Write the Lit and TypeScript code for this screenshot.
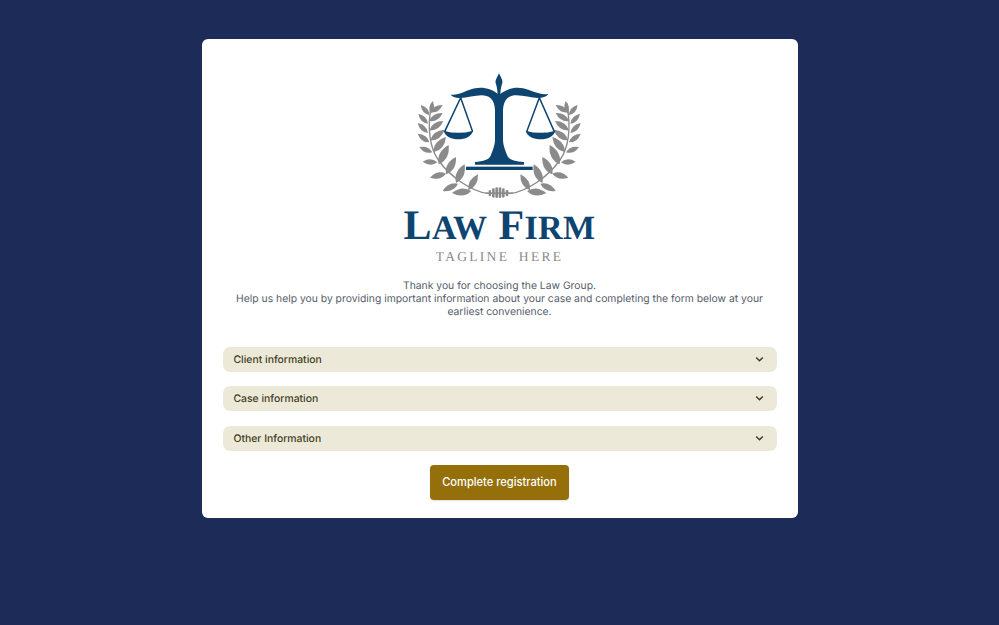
import { LitElement, html, css, svg } from "lit";
import { customElement } from "lit/decorators.js";

type Leaf = [number, number, number, number];
const leaves: Leaf[] = [
  [92, 146, 98, 108],
  [88, 150, 62, 120], [84, 176, 55, 146], [84, 204, 53, 174], [88, 232, 53, 206],
  [97, 262, 58, 246], [112, 292, 68, 290], [138, 326, 90, 338], [174, 356, 128, 378], [214, 378, 156, 384],
  [92, 142, 128, 120], [88, 168, 128, 144], [88, 196, 130, 168], [91, 226, 134, 194],
  [100, 262, 138, 216], [116, 298, 146, 240], [138, 328, 168, 276], [168, 354, 194, 298], [205, 376, 234, 328],
];

function leafPath([bx, by, tx, ty]: Leaf): string {
  const dx = tx - bx, dy = ty - by;
  const nx = -dy * 0.36, ny = dx * 0.36;
  const mx = bx + dx * 0.45, my = by + dy * 0.45;
  return `M${bx} ${by}Q${mx + nx} ${my + ny} ${tx} ${ty}Q${mx - nx} ${my - ny} ${bx} ${by}Z`;
}

const laurel = svg`
  <path d="M262 385C215 380 150 335 115 285C90 250 80 190 95 115" fill="none" stroke="#8b8b8b" stroke-width="4"/>
  ${leaves.map((l) => svg`<path d=${leafPath(l)} fill="#8b8b8b"/>`)}`;

const logo = svg`
<svg class="mark" viewBox="0 0 600 420" aria-hidden="true">
  <g>${laurel}</g>
  <g transform="matrix(-1 0 0 1 595 0)">${laurel}</g>
  <g fill="#8b8b8b">
    <rect x="258" y="382" width="80" height="5"/>
    <rect x="266" y="375" width="7" height="19" rx="3"/>
    <rect x="276" y="370" width="8" height="28" rx="3.5"/>
    <rect x="286" y="367" width="8" height="32" rx="3.5"/>
    <rect x="296" y="367" width="8" height="32" rx="3.5"/>
    <rect x="306" y="370" width="8" height="28" rx="3.5"/>
    <rect x="317" y="375" width="8" height="19" rx="3"/>
  </g>
  <g fill="#0d4470">
    <path d="M297 25C303 38 309 46 307 54C305 62 301 68 301 100L293 100C293 68 289 62 287 54C285 46 291 38 297 25Z"/>
    <path d="M152 89C175 93 197 76 225 70C250 65 277 72 297 90C317 72 344 65 369 70C397 76 420 92 445 87C440 95 430 98 418 99C385 100 345 80 322 100C312 110 310 122 309 135L309 222C309 242 316 256 322 272C326 283 345 289 372 291L372 299L225 299L225 291C250 289 268 283 272 272C278 256 285 242 285 222L285 135C284 122 282 110 272 100C250 80 210 100 178 99C165 98 156 95 152 89Z"/>
    <rect x="198" y="305" width="200" height="10"/>
    <path d="M131 197Q175 210 219 197C215 214 195 223 175 223C155 223 135 214 131 197Z"/>
    <path d="M377 197Q421 210 466 197C462 214 442 223 422 223C402 223 381 214 377 197Z"/>
  </g>
  <g fill="none" stroke="#0d4470" stroke-width="4.5">
    <path d="M134 200L182 98L218 200"/>
    <path d="M380 200L418 98L463 200"/>
  </g>
</svg>`;

@customElement("app-root")
export class AppRoot extends LitElement {
  static styles = css`
    :host {
      display: block;
      min-height: 625px;
      box-sizing: border-box;
      padding-top: 39px;
      background: #1c2b58;
      font-family: Inter, "Liberation Sans", sans-serif;
      text-rendering: geometricPrecision;
    }
    .card {
      box-sizing: border-box;
      width: 596px;
      height: 479px;
      margin: 0 auto;
      padding: 26px 21px 0;
      background: #fff;
      border-radius: 6px;
      display: flex;
      flex-direction: column;
      align-items: center;
    }
    .mark {
      display: block;
      width: 200px;
      height: 140px;
      flex: none;
    }
    .brand {
      margin-top: -2px;
      font-family: "Liberation Serif", serif;
      color: #0d4470;
      font-size: 42px;
      line-height: 46px;
      height: 46px;
      font-weight: 700;
      letter-spacing: 0.4px;
      white-space: nowrap;
    }
    .brand span {
      font-size: 34px;
    }
    .tagline {
      font-family: "Liberation Serif", serif;
      color: #8a8a8a;
      font-size: 13.5px;
      line-height: 16px;
      letter-spacing: 2.3px;
      word-spacing: 4px;
      white-space: nowrap;
    }
    .intro {
      margin: 14.5px 0 0;
      width: 100%;
      text-align: center;
      font-size: 10.35px;
      line-height: 13.33px;
      color: #555d6a;
    }
    .rows {
      margin-top: 27.5px;
      width: 100%;
      display: flex;
      flex-direction: column;
      gap: 14.6px;
    }
    .row {
      box-sizing: border-box;
      height: 24.8px;
      padding: 0 13px 0 11px;
      display: flex;
      align-items: center;
      justify-content: space-between;
      background: #ede9d9;
      border-radius: 7px;
      color: #423d1e;
      font-size: 10.4px;
      font-weight: 450;
    }
    .chev {
      width: 9px;
      height: 7px;
      display: block;
    }
    .submit {
      margin-top: 14px;
      width: 139px;
      height: 35px;
      border: 0;
      border-radius: 4px;
      background: #95700a;
      color: #fff;
      font-family: inherit;
      font-size: 11.1px;
      font-weight: 500;
      padding: 0;
      box-shadow: 0 1px 2px rgba(0, 0, 0, 0.12);
    }
  `;

  render() {
    const rows = ["Client information", "Case information", "Other Information"];
    return html`
      <main class="card">
        ${logo}
        <div class="brand">L<span>AW</span> F<span>IRM</span></div>
        <div class="tagline">TAGLINE HERE</div>
        <p class="intro">
          Thank you for choosing the Law Group.<br />
          Help us help you by providing important information about your case and completing the form below at your earliest convenience.
        </p>
        <div class="rows">
          ${rows.map(
            (r) => html`<div class="row">
              <span>${r}</span>
              <svg class="chev" viewBox="0 0 9 7" aria-hidden="true">
                <path d="M1.2 1.5L4.5 4.8L7.8 1.5" fill="none" stroke="#423d1e" stroke-width="1.5"/>
              </svg>
            </div>`
          )}
        </div>
        <button class="submit">Complete registration</button>
      </main>
    `;
  }
}
